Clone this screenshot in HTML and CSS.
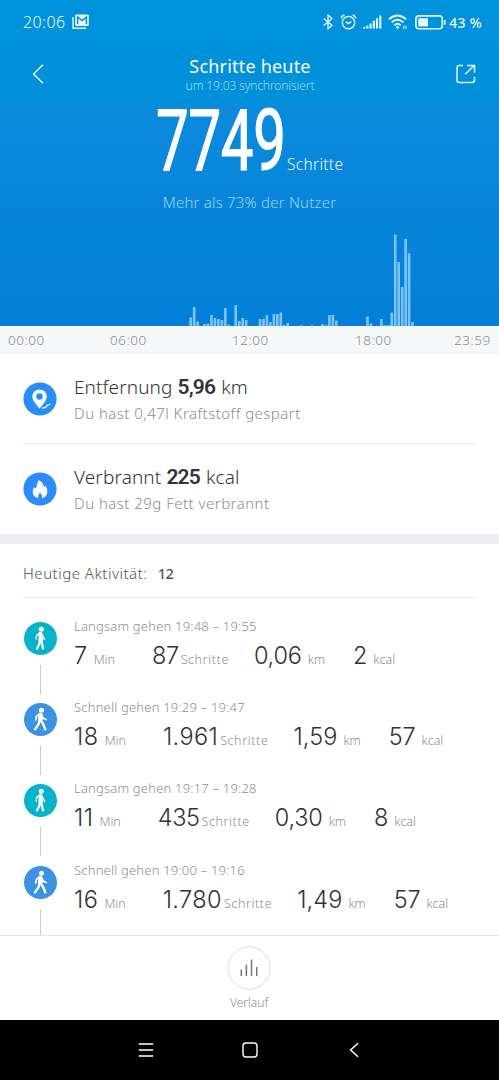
FILE: index.html
```html
<!DOCTYPE html>
<html lang="de">
<head>
    <meta charset="UTF-8">
    <meta name="viewport" content="width=device-width, initial-scale=1.0">
    <title>Schritte heute</title>
    <link rel="stylesheet" href="styles.css">
</head>
<body>
    <svg class="symbols" width="0" height="0">
        <symbol id="walk-slow" viewBox="0 0 33 33">
            <circle cx="17.3" cy="7.3" r="2.5" fill="#fff"/>
            <path d="M15.6 11L12.6 13.5L12.2 17M17.6 11.5L19.2 14.5L20.6 17.4" fill="none" stroke="#fff" stroke-width="1.5" stroke-linecap="round" stroke-linejoin="round"/>
            <path d="M15.4 10.7H17.4L18.2 17.5L15.2 18Z" fill="#fff" stroke="#fff" stroke-width="1.4" stroke-linejoin="round"/>
            <path d="M15.8 17.5L15.4 21.7L13 26.5M17.3 17.5L18 21.5L19 26.5" fill="none" stroke="#fff" stroke-width="2.2" stroke-linecap="round" stroke-linejoin="round"/>
        </symbol>
        <symbol id="walk-fast" viewBox="0 0 33 33">
            <circle cx="17.5" cy="7.3" r="2.5" fill="#fff"/>
            <path d="M15.6 11L12.3 13.4L11.8 17M17.5 11.5L19.2 15.2L22 16.5" fill="none" stroke="#fff" stroke-width="1.7" stroke-linecap="round" stroke-linejoin="round"/>
            <path d="M14.9 10.5L17.8 10.8L18.2 17L14.5 17.8Z" fill="#fff" stroke="#fff" stroke-linejoin="round"/>
            <path d="M15.3 17.5L14.6 21.2L11 26.3M16.7 17.5L19.2 21L21.3 26.5" fill="none" stroke="#fff" stroke-width="2.3" stroke-linecap="round" stroke-linejoin="round"/>
        </symbol>
    </svg>

    <div class="hero">
        <div class="status-bar">
            <span class="clock">20:06</span>
            <svg class="mail" width="18" height="16" viewBox="0 0 18 16">
                <path d="M1 3V14.2H14" fill="none" stroke="#e8f7ff" stroke-width="1.4"/>
                <rect x="3.2" y="0.5" width="13.6" height="11.6" rx="1" fill="#e8f7ff"/>
                <path d="M5.6 10.2V3L10 6.6L14.4 3V10.2" fill="none" stroke="#0090da" stroke-width="1.5"/>
            </svg>
            <div class="status-icons">
                <svg width="10" height="16" viewBox="0 0 10 16" fill="none" stroke="#e8f7ff" stroke-width="1.3">
                    <path d="M0.7 4.4L9 11.3L5 14.9V1.1L9 4.6L0.7 11.6"/>
                </svg>
                <svg width="17" height="16" viewBox="0 0 17 16" fill="none" stroke="#e8f7ff" stroke-width="1.4">
                    <circle cx="8.5" cy="8.6" r="6.2"/>
                    <path d="M5.8 7.7L8.3 9.6L11.3 7.7M1 4.2Q2 1.8 4.4 1M16 4.2Q15 1.8 12.6 1"/>
                </svg>
                <svg width="19" height="14" viewBox="0 0 19 14" fill="none" stroke="#e8f7ff" stroke-width="2.1">
                    <path d="M1.2 13.5V12M4.4 13.5V10.5M7.6 13.5V8.4M10.8 13.5V5.8M14 13.5V3.2M17.3 13.5V0.5"/>
                </svg>
                <svg width="20" height="16" viewBox="0 0 20 16" fill="none" stroke="#e8f7ff" stroke-width="1.9">
                    <path d="M0.8 5.4Q9.5 -2.2 18.2 5.4M3.6 8.4Q9.5 3.2 15.4 8.4M6.3 11.2Q9.5 8.4 12.7 11.2"/>
                    <circle cx="9.5" cy="13.2" r="1.5" fill="#e8f7ff" stroke="none"/>
                    <path d="M15.9 15V11.6M18 11.6V15" stroke-width="1"/>
                </svg>
                <svg width="31" height="15" viewBox="0 0 31 15">
                    <rect x="0.9" y="0.9" width="26.4" height="12.8" rx="3" fill="none" stroke="#e8f7ff" stroke-width="1.6"/>
                    <rect x="3.2" y="3.2" width="9.8" height="8.2" rx="0.8" fill="#e8f7ff"/>
                    <path d="M29.7 5V9.8" stroke="#e8f7ff" stroke-width="1.6"/>
                </svg>
                <span class="battery">43 %</span>
            </div>
        </div>

        <header class="title-bar">
            <svg width="12" height="20" viewBox="0 0 12 20" fill="none" stroke="#e8f7ff" stroke-width="1.5">
                <path d="M11 0.7L1.6 10L11 19.3"/>
            </svg>
            <div class="title">
                <h1>Schritte heute</h1>
                <p>um 19:03 synchronisiert</p>
            </div>
            <svg width="20" height="20" viewBox="0 0 20 20" fill="none" stroke="#e8f7ff" stroke-width="1.5">
                <path d="M7 1.5H3.2Q1 1.5 1 3.7V16.3Q1 18.5 3.2 18.5H16.3Q18.5 18.5 18.5 16.3V13M9.2 10.2L18 1.5M11 1.5H18.5V8.8"/>
            </svg>
        </header>

        <div class="total">
            <span class="total-value">7749</span>
            <span class="total-unit">Schritte</span>
        </div>
        <p class="rank">Mehr als 73% der Nutzer</p>

        <svg class="chart" id="chart" width="499" height="96" viewBox="0 0 499 96"></svg>
    </div>

    <div class="axis">
        <span>00:00</span>
        <span>06:00</span>
        <span>12:00</span>
        <span>18:00</span>
        <span>23:59</span>
    </div>

    <section class="summary">
        <div class="summary-row">
            <svg width="34" height="34" viewBox="0 0 34 34">
                <circle cx="17" cy="17" r="16.6" fill="#2b8cfb"/>
                <path d="M16.5 26.5Q9.3 19 9.3 14.6A7.2 7.2 0 0 1 23.7 14.6Q23.7 19 16.5 26.5Z" fill="#fff"/>
                <circle cx="16.5" cy="14.5" r="3.2" fill="#2b8cfb"/>
                <path d="M19 26.2L22.5 25.5L24 23.5L27.7 22" fill="none" stroke="#fff" stroke-width="1.3"/>
            </svg>
            <div class="summary-text">
                <h2>Entfernung <b>5,96</b> km</h2>
                <p>Du hast 0,47l Kraftstoff gespart</p>
            </div>
        </div>
        <div class="summary-row">
            <svg width="34" height="34" viewBox="0 0 34 34">
                <circle cx="17" cy="17" r="16.6" fill="#2b8cfb"/>
                <path d="M15.8 8Q20.8 10.8 20.9 15.3Q22.2 14.6 22.3 13.2Q24.8 16.6 24.3 20.5Q23.4 25.4 19.3 26Q19.8 23.3 17 20.8Q14.3 23.2 15.1 26Q9.8 25 9.7 19.8Q9.6 16.8 11.2 15.2Q12 16.3 13.2 16.3Q13.3 12.4 15.8 8Z" fill="#fff"/>
            </svg>
            <div class="summary-text">
                <h2>Verbrannt <b>225</b> kcal</h2>
                <p>Du hast 29g Fett verbrannt</p>
            </div>
        </div>
    </section>

    <section class="activity">
        <h3>Heutige Aktivität: <b>12</b></h3>
        <div class="activity-row slow">
            <div class="marker"><svg><use href="#walk-slow"/></svg></div>
            <div>
                <p class="period">Langsam gehen 19:48 – 19:55</p>
                <div class="values">
                    <span class="min"><b>7</b>Min</span>
                    <span class="steps"><b>87</b>Schritte</span>
                    <span class="km"><b>0,06</b>km</span>
                    <span class="kcal"><b>2</b>kcal</span>
                </div>
            </div>
        </div>
        <div class="activity-row fast">
            <div class="marker"><svg><use href="#walk-fast"/></svg></div>
            <div>
                <p class="period">Schnell gehen 19:29 – 19:47</p>
                <div class="values">
                    <span class="min"><b>18</b>Min</span>
                    <span class="steps"><b>1.961</b>Schritte</span>
                    <span class="km"><b>1,59</b>km</span>
                    <span class="kcal"><b>57</b>kcal</span>
                </div>
            </div>
        </div>
        <div class="activity-row slow">
            <div class="marker"><svg><use href="#walk-slow"/></svg></div>
            <div>
                <p class="period">Langsam gehen 19:17 – 19:28</p>
                <div class="values">
                    <span class="min"><b>11</b>Min</span>
                    <span class="steps"><b>435</b>Schritte</span>
                    <span class="km"><b>0,30</b>km</span>
                    <span class="kcal"><b>8</b>kcal</span>
                </div>
            </div>
        </div>
        <div class="activity-row fast">
            <div class="marker"><svg><use href="#walk-fast"/></svg></div>
            <div>
                <p class="period">Schnell gehen 19:00 – 19:16</p>
                <div class="values">
                    <span class="min"><b>16</b>Min</span>
                    <span class="steps"><b>1.780</b>Schritte</span>
                    <span class="km"><b>1,49</b>km</span>
                    <span class="kcal"><b>57</b>kcal</span>
                </div>
            </div>
        </div>
    </section>

    <footer class="history">
        <svg width="44" height="44" viewBox="0 0 44 44" fill="none">
            <circle cx="22" cy="22" r="21.2" stroke="#dcdcdc"/>
            <path d="M14.3 30V23.5M19.4 30V18.5M24.5 30V13.5M29.7 30V21" stroke="#777" stroke-width="1.5"/>
        </svg>
        <span>Verlauf</span>
    </footer>

    <nav class="nav-bar">
        <svg width="16" height="16" viewBox="0 0 16 16" fill="none" stroke="#fff" stroke-width="1.3">
            <path d="M0.8 2H15.2M0.8 8H15.2M0.8 14H15.2"/>
        </svg>
        <svg width="16" height="16" viewBox="0 0 16 16" fill="none" stroke="#fff" stroke-width="1.4">
            <rect x="1" y="1" width="14" height="14" rx="3"/>
        </svg>
        <svg width="16" height="16" viewBox="0 0 16 16" fill="none" stroke="#fff" stroke-width="1.5">
            <path d="M12 1.2L4.6 8L12 14.8"/>
        </svg>
    </nav>

    <script>
        // Schritte pro 10-Minuten-Abschnitt: [Abschnitt, Balkenhöhe]
        const bars = [
            [55, 8.5], [56, 19], [57, 4.5], [59, 2], [60, 2.5], [61, 11], [62, 8], [63, 7],
            [64, 6], [65, 18], [66, 1.2], [68, 21], [69, 5], [70, 8], [71, 6], [75, 7],
            [76, 7], [77, 11], [78, 4], [79, 12], [80, 12], [81, 13.5], [82, 1], [83, 3],
            [87, 0.8], [90, 0.8], [93, 2], [94, 1], [95, 11], [96, 11], [97, 5.5],
            [106, 9.5], [107, 2.5], [110, 7], [111, 0.8], [112, 0.8], [113, 13.5],
            [114, 91.5], [115, 64], [116, 39], [117, 87], [118, 72.5], [119, 4]
        ];
        const chart = document.getElementById('chart');

        bars.forEach(([slot, height]) => {
            const rect = document.createElementNS('http://www.w3.org/2000/svg', 'rect');
            rect.setAttribute('x', slot * 3.467 - 1.3);
            rect.setAttribute('y', 96 - height);
            rect.setAttribute('width', 2.6);
            rect.setAttribute('height', height);
            chart.appendChild(rect);
        });
    </script>
</body>
</html>
```
FILE: styles.css
```css
* {
    box-sizing: border-box;
}

body {
    margin: 0;
    width: 499px;
    height: 1080px;
    display: flex;
    flex-direction: column;
    overflow: hidden;
    background-color: #fff;
    font-family: "Noto Sans", "Open Sans", sans-serif;
    font-weight: 300;
    color: #8c8c8c;
}

h1, h2, h3, p {
    margin: 0;
    font-weight: 300;
}

span, h1, h2, h3, p {
    white-space: nowrap;
}

svg {
    display: block;
    flex: none;
}

.symbols {
    position: absolute;
}

.hero {
    height: 326px;
    display: flex;
    flex-direction: column;
    background: linear-gradient(#0093dc 0, #0090da 100px, #0b8adc 108px, #047fd9 100%);
    color: #e8f7ff;
}

.status-bar {
    height: 44px;
    padding: 0 17px 0 23px;
    display: flex;
    align-items: center;
}

.clock {
    font-size: 16px;
    letter-spacing: 0.4px;
    width: 49px;
}

.status-icons {
    margin-left: auto;
    display: flex;
    align-items: center;
    gap: 6.4px;
}

.battery {
    font-size: 14px;
    font-weight: 500;
    letter-spacing: 0.3px;
    margin-left: -3px;
}

.title-bar {
    height: 60px;
    padding: 0 23px 0 32px;
    display: flex;
    align-items: center;
    justify-content: space-between;
}

.title {
    text-align: center;
}

.title h1 {
    font-size: 18px;
    line-height: 24px;
    font-weight: 400;
    letter-spacing: 0.2px;
    color: #fff;
}

.title p {
    font-size: 12px;
    line-height: 16px;
    letter-spacing: -0.1px;
    color: #a0daf8;
}

.total {
    height: 80px;
    padding-left: 156px;
    display: flex;
    align-items: baseline;
}

.total-value {
    width: 131px;
    font-family: Roboto, sans-serif;
    font-size: 85px;
    line-height: 75px;
    font-weight: 400;
    letter-spacing: -0.5px;
    color: #fff;
    -webkit-text-stroke: 1.2px #fff;
    transform: scaleX(0.685);
    transform-origin: left;
}

.total-unit {
    font-size: 15.5px;
    letter-spacing: 0.3px;
}

.rank {
    text-align: center;
    font-size: 15px;
    line-height: 20px;
    letter-spacing: 0.2px;
    margin-top: 8px;
    color: #9bd2f8;
}

.chart {
    margin-top: auto;
    fill: #7cc4f6;
}

.axis {
    height: 28px;
    padding-left: 8px;
    display: grid;
    grid-template-columns: 102px 122px 123px 99px 45px;
    background-color: #f6f7f9;
    font-size: 13.5px;
    line-height: 28px;
    letter-spacing: 0.5px;
}

.summary {
    height: 180px;
    padding: 0 23px;
}

.summary-row {
    height: 90px;
    display: flex;
    align-items: center;
    gap: 17px;
}

.summary-row:first-child {
    border-bottom: 1px solid #ebebeb;
}

.summary-text {
    padding-top: 2px;
}

.summary h2 {
    font-size: 19px;
    line-height: 26px;
    letter-spacing: 0.1px;
    color: #333;
}

.summary h2 b {
    font-family: Roboto, sans-serif;
    font-size: 21px;
    font-weight: 600;
    letter-spacing: -0.8px;
    margin-right: 1px;
}

.summary p {
    font-size: 15px;
    line-height: 26px;
    letter-spacing: 0.47px;
}

.activity {
    height: 401px;
    border-top: 10px solid #ecedf0;
    padding: 0 23px;
    overflow: hidden;
}

.activity h3 {
    height: 54px;
    line-height: 59px;
    border-bottom: 1px solid #ebebeb;
    font-size: 15px;
    letter-spacing: 0.5px;
    color: #555;
}

.activity h3 b {
    font-size: 14.5px;
    font-weight: 500;
    letter-spacing: -0.5px;
    margin-left: 6px;
}

.activity-row {
    height: 81.2px;
    display: flex;
    gap: 17px;
    padding-top: 18px;
}

.marker {
    width: 34px;
    height: 81px;
    padding-top: 6px;
}

.marker svg {
    width: 33px;
    height: 33px;
    border-radius: 50%;
    margin-left: 1px;
}

.marker::after {
    content: "";
    display: block;
    width: 1px;
    height: 29px;
    margin: 10px 0 0 17px;
    background-color: #ccc;
}

.slow .marker svg {
    background-color: #06b3cb;
}

.fast .marker svg {
    background-color: #3d91e1;
}

.period {
    font-size: 13px;
    line-height: 20px;
    letter-spacing: 0.2px;
}

.values {
    display: flex;
    font-size: 12.5px;
    line-height: 40px;
}

.values b {
    font-family: Inter, sans-serif;
    font-size: 23.5px;
    font-weight: 300;
    letter-spacing: -0.2px;
    margin-right: 6px;
    color: #333;
}

.min {
    margin-right: 37px;
}

.values .min b {
    letter-spacing: 0.5px;
}

.steps {
    margin-right: 25px;
    letter-spacing: 0.6px;
}

.values .steps b {
    letter-spacing: -0.4px;
    margin-right: 2px;
}

.fast .values .steps b {
    letter-spacing: 0.4px;
}

.km {
    margin-right: 28px;
}

.fast .values .km b {
    letter-spacing: 0.1px;
}

.history {
    height: 85px;
    border-top: 1px solid #e4e4e4;
    display: flex;
    flex-direction: column;
    align-items: center;
    padding: 10px 1px 0 0;
    font-size: 12px;
    line-height: 26px;
}

.nav-bar {
    height: 60px;
    background-color: #000;
    display: flex;
    align-items: center;
    justify-content: center;
    gap: 88px;
}
```
